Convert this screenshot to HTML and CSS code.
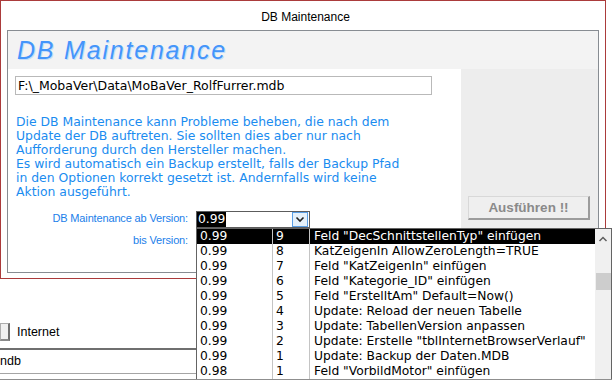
FILE: index.html
```html
<!DOCTYPE html>
<html lang="de">
<head>
    <meta charset="UTF-8">
    <title>DB Maintenance</title>
    <link rel="stylesheet" href="styles.css">
</head>
<body>

    <!-- Main form behind the dialog -->
    <div class="app">
        <div class="app-row">
            <button class="app-button"></button>
            <span class="app-label">Internet</span>
        </div>
        <div class="app-field">ndb</div>
        <div class="app-field last"></div>
    </div>

    <!-- Dialog window -->
    <div class="window">
        <div class="window-title">DB Maintenance</div>

        <div class="frame">
            <div class="frame-header">DB Maintenance</div>

            <div class="frame-body">
                <!-- Left side: path, info text, version selection -->
                <div class="main">
                    <div class="path-box">F:\_MobaVer\Data\MoBaVer_RolfFurrer.mdb</div>

                    <p class="info">
                        Die DB Maintenance kann Probleme beheben, die nach dem<br>
                        Update der DB auftreten. Sie sollten dies aber nur nach<br>
                        Aufforderung durch den Hersteller machen.<br>
                        Es wird automatisch ein Backup erstellt, falls der Backup Pfad<br>
                        in den Optionen korrekt gesetzt ist. Andernfalls wird keine<br>
                        Aktion ausgeführt.
                    </p>

                    <div class="version-form">
                        <label class="version-label">DB Maintenance ab Version:</label>
                        <div class="combo">
                            <span class="combo-value"><span class="selected-text">0.99</span></span>
                            <span class="combo-button">
                                <svg width="14" height="13" viewBox="0 0 14 13">
                                    <path d="M3.5 4.5 L7 8 L10.5 4.5" fill="none" stroke="#222" stroke-width="1.6"/>
                                </svg>
                            </span>

                            <!-- Opened dropdown list -->
                            <div class="dropdown">
                                <div class="rows">
                                    <div class="row active"><span>0.99</span><span>9</span><span>Feld "DecSchnittstellenTyp" einfügen</span></div>
                                    <div class="row"><span>0.99</span><span>8</span><span>KatZeigenIn AllowZeroLength=TRUE</span></div>
                                    <div class="row"><span>0.99</span><span>7</span><span>Feld "KatZeigenIn" einfügen</span></div>
                                    <div class="row"><span>0.99</span><span>6</span><span>Feld "Kategorie_ID" einfügen</span></div>
                                    <div class="row"><span>0.99</span><span>5</span><span>Feld "ErstelltAm" Default=Now()</span></div>
                                    <div class="row"><span>0.99</span><span>4</span><span>Update: Reload der neuen Tabelle</span></div>
                                    <div class="row"><span>0.99</span><span>3</span><span>Update: TabellenVersion anpassen</span></div>
                                    <div class="row"><span>0.99</span><span>2</span><span>Update: Erstelle "tblInternetBrowserVerlauf"</span></div>
                                    <div class="row"><span>0.99</span><span>1</span><span>Update: Backup der Daten.MDB</span></div>
                                    <div class="row"><span>0.98</span><span>1</span><span>Feld "VorbildMotor" einfügen</span></div>
                                </div>
                                <div class="scrollbar">
                                    <div class="scroll-up">
                                        <svg width="16" height="12" viewBox="0 0 16 12">
                                            <path d="M4.5 8 L8 4.5 L11.5 8" fill="none" stroke="#606060" stroke-width="1.5"/>
                                        </svg>
                                    </div>
                                    <div class="scroll-thumb"></div>
                                </div>
                            </div>
                        </div>
                        <label class="version-label">bis Version:</label>
                    </div>
                </div>

                <!-- Right side: action button -->
                <div class="side">
                    <button class="run-button">Ausführen !!</button>
                </div>
            </div>
        </div>
    </div>

</body>
</html>
```

FILE: styles.css
```css
/* General page */
body {
    margin: 0;
    width: 612px;
    height: 381px;
    overflow: hidden;
    position: relative;
    background-color: #fff;
    font-family: 'Liberation Sans', Arial, sans-serif;
}

/* Main form behind the dialog */
.app {
    padding-top: 323px;
}

.app-row {
    display: flex;
    align-items: center;
    height: 18px;
}

.app-button {
    width: 10px;
    height: 18px;
    padding: 0;
    background-color: #f0f0f0;
    border: 1px solid #adadad;
    border-right: 2px solid #6e6e6e;
    border-bottom: 2px solid #8a8a8a;
}

.app-label {
    margin-left: 7px;
    font-size: 12.5px;
    color: #000;
}

.app-field {
    height: 23px;
    margin-top: 7px;
    border-top: 2px solid #6f6f6f;
    border-bottom: 1px solid #a5a5a5;
    font-size: 12.5px;
    line-height: 23px;
}

.app-field.last {
    height: 0;
    margin-top: 5px;
    border-bottom: none;
    border-top: 1px solid #8f8f8f;
}

/* Dialog window */
.window {
    position: absolute;
    top: 0;
    left: 0;
    width: 592px;
    height: 277px;
    padding: 0 6px;
    border: 1px solid #ab3b3b;
    background-color: #fff;
}

.window-title {
    height: 29px;
    padding-left: 5px;
    line-height: 32px;
    text-align: center;
    font-size: 12px;
    color: #000;
}

.frame {
    height: 241px;
    border: 1px solid #878c92;
}

.frame-header {
    height: 38px;
    line-height: 38px;
    padding-left: 9px;
    background-color: #f3f3f3;
    font-size: 25px;
    font-style: italic;
    letter-spacing: 1.8px;
    color: #4495fa;
    text-shadow: 1px 1px 0 #c4ddfb;
}

.frame-body {
    display: flex;
    height: 203px;
}

/* Left side */
.main {
    width: 446px;
    padding: 7px 0 0 7px;
    font-family: 'DejaVu Sans', Verdana, sans-serif;
}

.path-box {
    width: 413px;
    height: 17px;
    padding-left: 2px;
    border: 1px solid #b9b9b9;
    font-size: 12.5px;
    line-height: 17px;
    color: #000;
}

.info {
    margin: 20px 0 0 1px;
    font-size: 12.4px;
    line-height: 14px;
    color: #1a8cf0;
}

.version-form {
    display: grid;
    grid-template-columns: 173px 114px;
    column-gap: 8px;
    row-gap: 5px;
    margin-top: 12px;
}

.version-label {
    grid-column: 1;
    text-align: right;
    font-family: 'Liberation Sans', Arial, sans-serif;
    font-size: 11px;
    letter-spacing: -0.15px;
    line-height: 15px;
    color: #1b80ea;
}

/* Combo box */
.combo {
    position: relative;
    display: flex;
    height: 15px;
    border: 1px solid #5c5c5c;
    background-color: #fff;
}

.combo-value {
    flex: 1;
    font-size: 12.3px;
    line-height: 15px;
}

.selected-text {
    display: inline-block;
    padding: 0 1px;
    background-color: #000;
    color: #fff;
}

.combo-button {
    display: flex;
    align-items: center;
    justify-content: center;
    width: 14px;
    height: 13px;
    margin: 0 1px 0 0;
    border: 1px solid #5a9fe6;
    background-color: #e5f1fb;
}

/* Opened list */
.dropdown {
    position: absolute;
    top: 16px;
    left: -1px;
    width: 414px;
    display: flex;
    border: 1px solid #646464;
    border-bottom: none;
    background-color: #fff;
}

.rows {
    flex: 1;
}

.row {
    display: grid;
    grid-template-columns: 76px 37px 1fr;
    height: 15px;
    font-size: 12.3px;
    line-height: 15px;
    color: #000;
}

.row span {
    padding-left: 3px;
    white-space: nowrap;
    overflow: hidden;
}

.row span:nth-child(-n+2) {
    border-right: 1px solid #c4c4c4;
}

.row span:last-child {
    padding-left: 4px;
}

.row.active {
    background-color: #000;
    color: #fff;
}

.scrollbar {
    width: 16px;
    background-color: #f0f0f0;
}

.scroll-up {
    display: flex;
    align-items: flex-end;
    height: 16px;
}

.scroll-thumb {
    width: 15px;
    height: 17px;
    margin: 28px 0 0 1px;
    background-color: #cdcdcd;
}

/* Right side */
.side {
    width: 130px;
    padding: 127px 0 0 7px;
    background-color: #ededed;
}

.run-button {
    width: 122px;
    height: 24px;
    padding: 0;
    background-color: #efefef;
    border: 1px solid #d8d8d8;
    border-right: 2px solid #9c9c9c;
    border-bottom: 2px solid #9c9c9c;
    font-family: 'Liberation Sans', Arial, sans-serif;
    font-size: 13.5px;
    font-weight: bold;
    color: #8a8a8a;
}
```
